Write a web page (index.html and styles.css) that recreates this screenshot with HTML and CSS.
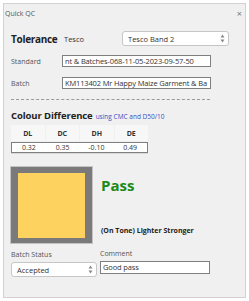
FILE: index.html
```html
<!DOCTYPE html>
<html>
<head>
  <title>Quick QC</title>
  <link rel="stylesheet" href="styles.css">
</head>
<body>
  <div class="window">
    <div class="title-bar">
      <span class="title">Quick QC</span>
      <span class="close">&times;</span>
    </div>

    <div class="content">
      <div class="tolerance-row">
        <span class="heading tol-heading">Tolerance</span>
        <span class="tol-name">Tesco</span>
        <div class="combo band-combo">
          <span>Tesco Band 2</span>
          <svg class="spin" width="5" height="9" viewBox="0 0 5 9"><path d="M2.5 0.5L4.5 3.5H0.5Z M2.5 8.5L0.5 5.5H4.5Z" fill="#8a8a8a"/></svg>
        </div>
      </div>

      <div class="field-row standard-row">
        <span class="label">Standard</span>
        <div class="text-box">nt &amp; Batches-068-11-05-2023-09-57-50</div>
      </div>

      <div class="field-row batch-row">
        <span class="label">Batch</span>
        <div class="text-box">KM113402 Mr Happy Maize Garment &amp; Ba</div>
      </div>

      <div class="divider"></div>

      <div class="diff-title">
        <span class="heading small">Colour Difference</span>
        <span class="method">using CMC and D50/10</span>
      </div>

      <div class="diff-table">
        <div class="diff-head">
          <span>DL</span>
          <span>DC</span>
          <span>DH</span>
          <span>DE</span>
        </div>
        <div class="diff-values">
          <span>0.32</span>
          <span>0.35</span>
          <span>-0.10</span>
          <span>0.49</span>
        </div>
      </div>

      <div class="result">
        <div class="swatch-frame">
          <div class="swatch" style="background: #fdd25e;"></div>
        </div>
        <div class="result-text">
          <div class="verdict">Pass</div>
          <div class="verdict-detail">(On Tone) Lighter Stronger</div>
        </div>
      </div>

      <div class="bottom-row">
        <div class="status-col">
          <span class="label">Batch Status</span>
          <div class="combo status-combo">
            <span>Accepted</span>
            <svg class="spin" width="5" height="9" viewBox="0 0 5 9"><path d="M2.5 0.5L4.5 3.5H0.5Z M2.5 8.5L0.5 5.5H4.5Z" fill="#8a8a8a"/></svg>
          </div>
        </div>
        <div class="comment-col">
          <span class="label">Comment</span>
          <div class="text-box comment-box">Good pass</div>
        </div>
      </div>
    </div>
  </div>
</body>
</html>
```

FILE: styles.css
```css
:root {
  --window: #f0f0f0;
  --frame: #d2d2d2;
  --text: #333333;
  --text-light: #555555;
  --box-border: #7f7f7f;
  --combo-border: #c6c6c6;
  --pass: #1b8a1b;
  --link: #3c4fc4;
  --font: 'Open Sans', 'Noto Sans', sans-serif;
}

* {
  box-sizing: border-box;
  margin: 0;
  padding: 0;
}

body {
  background: #ffffff;
  font-family: var(--font);
  color: var(--text);
  font-size: 7.5px;
}

.window {
  margin: 3px;
  width: 243px;
  height: 295px;
  background: var(--window);
  border: 1px solid var(--frame);
}

.title-bar {
  height: 19px;
  display: flex;
  align-items: center;
  justify-content: space-between;
  padding: 0 3px 0 1px;
}

.title {
  font-size: 7px;
  color: var(--text-light);
}

.close {
  font-size: 9px;
  color: #777777;
}

.content {
  padding: 0 7px;
}

/* Tolerance */
.tolerance-row {
  display: flex;
  align-items: center;
  height: 15px;
  margin-top: 8px;
}

.heading {
  font-size: 10.5px;
  font-weight: 700;
  color: #222222;
  letter-spacing: -0.1px;
}

.tol-heading {
  font-size: 10px;
  width: 53px;
  letter-spacing: -0.3px;
}

.heading.small {
  font-size: 9.5px;
}

.tol-name {
  width: 58px;
}

.combo {
  display: flex;
  align-items: center;
  justify-content: space-between;
  background: #ffffff;
  border: 1px solid var(--combo-border);
  border-radius: 3px;
  padding: 0 3px 0 5px;
}

.band-combo {
  width: 107px;
  height: 15px;
}

.spin {
  display: block;
}

/* Standard / Batch */
.field-row {
  display: flex;
  align-items: center;
}

.standard-row {
  margin-top: 9px;
}

.batch-row {
  margin-top: 10px;
}

.label {
  width: 51px;
  color: var(--text-light);
  font-size: 7px;
}

.text-box {
  width: 149px;
  height: 12px;
  line-height: 10px;
  background: #ffffff;
  border: 1px solid var(--box-border);
  padding: 0 2px;
  white-space: nowrap;
  overflow: hidden;
  font-size: 7.5px;
  letter-spacing: -0.15px;
}

.divider {
  width: 199px;
  margin-top: 10px;
  border-top: 1px dashed #9a9a9a;
}

/* Colour difference */
.diff-title {
  display: flex;
  align-items: baseline;
  gap: 3px;
  margin-top: 9px;
  height: 12px;
}

.method {
  color: var(--link);
  font-size: 6.5px;
}

.diff-table {
  width: 137px;
  margin-top: 4px;
}

.diff-head {
  display: grid;
  grid-template-columns: repeat(4, 1fr);
  gap: 1px;
  height: 16px;
}

.diff-head span {
  display: flex;
  align-items: center;
  justify-content: center;
  background: #f7f7f7;
  font-weight: 700;
  font-size: 7px;
  color: #333333;
}

.diff-values {
  display: grid;
  grid-template-columns: repeat(4, 1fr);
  height: 11px;
  margin-top: 1px;
  background: #ffffff;
  border: 1px solid var(--box-border);
  box-shadow: 0 1px 0 #d8d8d8;
}

.diff-values span {
  text-align: center;
  line-height: 9px;
  font-size: 7px;
}

/* Result */
.result {
  display: flex;
  margin-top: 13px;
}

.swatch-frame {
  width: 83px;
  height: 78px;
  border: 1px solid #c4c4c4;
  background: #7a7a7a;
  padding: 6px 7px 5px 7px;
  margin-left: -1px;
}

.swatch {
  width: 100%;
  height: 100%;
}

.result-text {
  display: flex;
  flex-direction: column;
  justify-content: space-between;
  padding: 10px 0 9px 8px;
}

.verdict {
  font-size: 15px;
  font-weight: 700;
  color: var(--pass);
  line-height: 18px;
}

.verdict-detail {
  font-size: 7px;
  font-weight: 700;
  color: #222222;
}

/* Batch status / comment */
.bottom-row {
  display: flex;
  margin-top: 5px;
}

.status-col,
.comment-col {
  display: flex;
  flex-direction: column;
  gap: 3px;
}

.status-col {
  width: 89px;
}

.status-col .label {
  margin-top: 1px;
}

.status-combo {
  width: 86px;
  height: 15px;
}

.comment-box {
  width: 110px;
  height: 13px;
  line-height: 11px;
}
```
